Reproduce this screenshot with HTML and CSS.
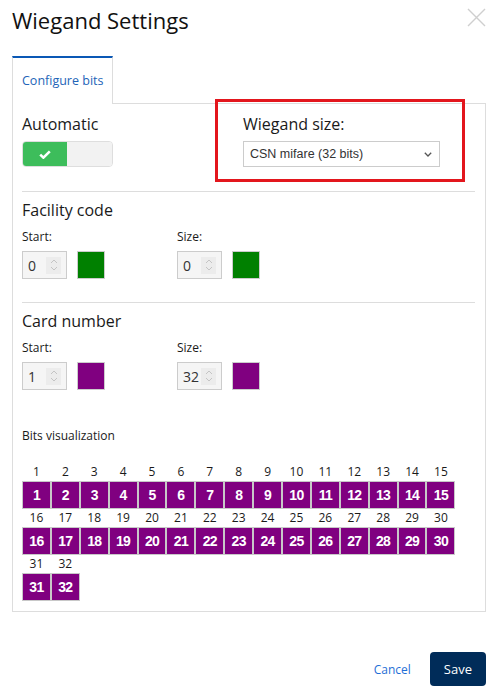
FILE: index.html
```html
<!DOCTYPE html>
<html lang="en">
<head>
    <meta charset="UTF-8">
    <meta name="viewport" content="width=device-width, initial-scale=1.0">
    <title>Wiegand Settings</title>
    <link rel="stylesheet" href="styles.css">
</head>
<body>
    <div class="modal">
        <div class="modal-header">
            <h1 class="modal-title">Wiegand Settings</h1>
            <a href="#" class="close-btn">
                <svg viewBox="0 0 20 20" width="20" height="20">
                    <path d="M2 2L19 19M19 2L2 19" stroke="#cfcfcf" stroke-width="1.4" fill="none"></path>
                </svg>
            </a>
        </div>

        <ul class="tabs">
            <li class="tab active">Configure bits</li>
        </ul>

        <div class="tab-panel">
            <div class="top-row">
                <div class="auto-col">
                    <div class="field-title">Automatic</div>
                    <div class="toggle">
                        <span class="toggle-on">
                            <svg viewBox="0 0 12 9" width="12" height="9">
                                <path d="M1.2 4.6L4.4 7.6L10.8 1.4" stroke="white" stroke-width="2.6" fill="none"></path>
                            </svg>
                        </span>
                        <span class="toggle-off"></span>
                    </div>
                </div>
                <div class="size-box">
                    <div class="field-title">Wiegand size:</div>
                    <div class="select">
                        <span>CSN mifare (32 bits)</span>
                        <svg viewBox="0 0 8 5" width="8" height="5">
                            <path d="M0.8 0.8L4 4L7.2 0.8" stroke="#555" stroke-width="1.3" fill="none"></path>
                        </svg>
                    </div>
                </div>
            </div>

            <!-- Facility code -->
            <div class="section">
                <div class="section-title">Facility code</div>
                <div class="pair-row">
                    <div class="pair">
                        <div class="small-label">Start:</div>
                        <div class="input-row">
                            <div class="num-input"><span>0</span><span class="spin"><svg viewBox="0 0 8 14" width="8" height="14"><path d="M1 5L4 2L7 5M1 9L4 12L7 9" stroke="#c4c4c4" stroke-width="1" fill="none"></path></svg></span></div>
                            <div class="swatch green"></div>
                        </div>
                    </div>
                    <div class="pair">
                        <div class="small-label">Size:</div>
                        <div class="input-row">
                            <div class="num-input"><span>0</span><span class="spin"><svg viewBox="0 0 8 14" width="8" height="14"><path d="M1 5L4 2L7 5M1 9L4 12L7 9" stroke="#c4c4c4" stroke-width="1" fill="none"></path></svg></span></div>
                            <div class="swatch green"></div>
                        </div>
                    </div>
                </div>
            </div>

            <!-- Card number -->
            <div class="section">
                <div class="section-title">Card number</div>
                <div class="pair-row">
                    <div class="pair">
                        <div class="small-label">Start:</div>
                        <div class="input-row">
                            <div class="num-input"><span>1</span><span class="spin"><svg viewBox="0 0 8 14" width="8" height="14"><path d="M1 5L4 2L7 5M1 9L4 12L7 9" stroke="#c4c4c4" stroke-width="1" fill="none"></path></svg></span></div>
                            <div class="swatch purple"></div>
                        </div>
                    </div>
                    <div class="pair">
                        <div class="small-label">Size:</div>
                        <div class="input-row">
                            <div class="num-input"><span>32</span><span class="spin"><svg viewBox="0 0 8 14" width="8" height="14"><path d="M1 5L4 2L7 5M1 9L4 12L7 9" stroke="#c4c4c4" stroke-width="1" fill="none"></path></svg></span></div>
                            <div class="swatch purple"></div>
                        </div>
                    </div>
                </div>
            </div>

            <div class="bits">
                <div class="small-label bits-title">Bits visualization</div>
                <div class="bits-grid" id="bitsGrid"></div>
            </div>
        </div>

        <div class="modal-footer">
            <a href="#" class="cancel-btn">Cancel</a>
            <a href="#" class="save-btn">Save</a>
        </div>
    </div>

    <script>
        // Pintar los 32 bits
        const grid = document.getElementById('bitsGrid');
        for (let i = 1; i <= 32; i++) {
            const cell = document.createElement('div');
            cell.className = 'bit';
            cell.innerHTML = '<div class="bit-label">' + i + '</div><div class="bit-box">' + i + '</div>';
            grid.appendChild(cell);
        }
    </script>
</body>
</html>
```

FILE: styles.css
```css
body {
    margin: 0;
    font-family: "Open Sans", "Liberation Sans", sans-serif;
    background-color: white;
    color: #1a1a1a;
}

.modal {
    padding: 0 13px 0 12px;
}

.modal-header {
    height: 56px;
    display: flex;
    justify-content: space-between;
    align-items: flex-start;
}

.modal-title {
    margin: 0;
    padding-top: 5px;
    font-size: 22px;
    line-height: 30px;
    font-weight: normal;
    color: #111;
}

.close-btn {
    margin-top: 7px;
    display: block;
}

/* Pestañas */
.tabs {
    list-style: none;
    margin: 0;
    padding: 0;
    height: 47px;
    border-bottom: 1px solid #ddd;
    display: flex;
}

.tab {
    width: 101px;
    height: 48px;
    box-sizing: border-box;
    padding: 0 0 0 9px;
    border-top: 2px solid #0a58b5;
    border-left: 1px solid #ddd;
    border-right: 1px solid #ddd;
    background-color: white;
    color: #2364b8;
    font-size: 12.5px;
    line-height: 45px;
}

.tab-panel {
    border: 1px solid #ddd;
    border-top: none;
    padding: 0 10px 10px 9px;
}

.top-row {
    display: flex;
    align-items: flex-start;
    padding-top: 9px;
    margin-bottom: 9px;
}

.auto-col {
    width: 193px;
}

.field-title {
    font-size: 16px;
    line-height: 22px;
    margin-bottom: 6px;
}

.toggle {
    width: 91px;
    height: 26px;
    box-sizing: border-box;
    border: 1px solid #dedede;
    border-radius: 4px;
    overflow: hidden;
    display: flex;
}

.toggle-on {
    width: 44px;
    background-color: #3dbd5b;
    display: flex;
    align-items: center;
    justify-content: center;
}

.toggle-off {
    flex: 1;
    background-color: #f2f2f2;
}

.size-box {
    width: 250px;
    box-sizing: border-box;
    margin-top: -14px;
    border: 3px solid #e3161d;
    padding: 11px 22px 12px 25px;
}

.select {
    height: 26px;
    box-sizing: border-box;
    border: 1px solid #ccc;
    padding: 0 7px 0 6px;
    display: flex;
    justify-content: space-between;
    align-items: center;
    font-family: "Liberation Sans", Arial, sans-serif;
    font-size: 12.5px;
    color: #333;
}

/* Secciones */
.section {
    border-top: 1px solid #ddd;
    padding-bottom: 23px;
}

.section-title {
    font-size: 16px;
    line-height: 22px;
    margin-top: 7px;
}

.small-label {
    font-size: 12px;
    line-height: 18px;
    margin-top: 7px;
}

.pair-row {
    display: flex;
}

.pair {
    width: 155px;
}

.input-row {
    display: flex;
    gap: 10px;
    margin-top: 5px;
}

.num-input {
    width: 45px;
    height: 28px;
    box-sizing: border-box;
    border: 1px solid #ccc;
    background-color: #f5f5f5;
    display: flex;
    align-items: center;
    justify-content: space-between;
    padding: 0 5px;
    font-size: 14px;
    color: #333;
}

.spin {
    width: 15px;
    height: 17px;
    background-color: #ececec;
    display: flex;
    align-items: center;
    justify-content: center;
}

.swatch {
    width: 28px;
    height: 28px;
    box-sizing: border-box;
    border: 1px solid #ccc;
}

.green {
    background-color: #008000;
}

.purple {
    background-color: #800080;
}

/* Bits */
.bits-title {
    margin-top: 14px;
}

.bits-grid {
    margin-top: 18px;
    display: grid;
    grid-template-columns: repeat(15, 28.9px);
}

.bit-label {
    height: 18px;
    line-height: 18px;
    text-align: center;
    font-size: 12px;
    color: #1a1a1a;
}

.bit-box {
    height: 28px;
    box-sizing: border-box;
    border: 1px solid #c8c8c8;
    background-color: #800080;
    color: white;
    font-family: "Liberation Sans", Arial, sans-serif;
    font-weight: bold;
    font-size: 14px;
    letter-spacing: -0.7px;
    line-height: 26px;
    text-align: center;
}

/* Pie */
.modal-footer {
    display: flex;
    justify-content: flex-end;
    align-items: center;
    gap: 19px;
    padding-top: 40px;
}

.cancel-btn {
    color: #1f6fd6;
    text-decoration: none;
    font-size: 12px;
}

.save-btn {
    height: 34px;
    line-height: 34px;
    padding: 0 14px;
    background-color: #002c59;
    color: white;
    border-radius: 4px;
    text-decoration: none;
    font-size: 13px;
}
```
